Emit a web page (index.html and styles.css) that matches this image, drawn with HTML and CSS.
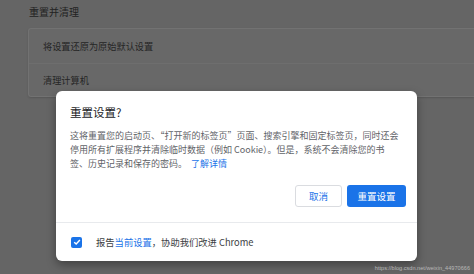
FILE: index.html
```html
<!DOCTYPE html>
<html lang="zh-CN">
  <head>
    <meta charset="UTF-8" />
    <title>重置设置</title>
    <link rel="stylesheet" href="styles.css">
  </head>
  <body>
    <div class="page">
      <h2 class="section-title">重置并清理</h2>
      <div class="card">
        <div class="card-row">将设置还原为原始默认设置</div>
        <div class="card-row">清理计算机</div>
      </div>
    </div>

    <div class="dialog">
      <div class="dialog-body">
        <h1 class="dialog-title">重置设置?</h1>
        <p class="dialog-text">
          这将重置您的启动页、“打开新的标签页”页面、搜索引擎和固定标签页，同时还会停用所有扩展程序并清除临时数据（例如 Cookie）。但是，系统不会清除您的书签、历史记录和保存的密码。<a href="#" class="link">了解详情</a>
        </p>
        <div class="dialog-buttons">
          <button class="btn btn-cancel">取消</button>
          <button class="btn btn-primary">重置设置</button>
        </div>
      </div>
      <div class="dialog-footer">
        <span class="checkbox">
          <svg width="8" height="8" viewBox="0 0 10 10">
            <path d="M1.5 5.2 L4 7.6 L8.6 2.6" fill="none" stroke="#fff" stroke-width="1.8" />
          </svg>
        </span>
        <span class="footer-text">报告<a href="#" class="link">当前设置</a>，协助我们改进 Chrome</span>
      </div>
    </div>

    <div class="watermark">https://blog.csdn.net/weixin_44970666</div>
  </body>
</html>
```

FILE: styles.css
```css
body {
  margin: 0;
  width: 474px;
  height: 274px;
  overflow: hidden;
  background-color: #656565;
  font-family: "Noto Sans CJK SC", "Noto Sans", sans-serif;
  position: relative;
}
.page {
  padding: 5px 0 0 28px;
}
.section-title {
  margin: 0 0 9px 1px;
  font-size: 10px;
  font-weight: normal;
  color: #222;
  line-height: 14px;
}
.card {
  background-color: #686868;
  border: 1px solid #727272;
  border-right: none;
  border-radius: 3px 0 0 3px;
  box-shadow: 0 1px 2px rgba(0, 0, 0, 0.15);
  height: 67px;
}
.card-row {
  padding-left: 14px;
  height: 34px;
  line-height: 34px;
  font-size: 9.2px;
  color: #252525;
}
.card-row + .card-row {
  border-top: 1px solid #6e6e6e;
  height: 32px;
  line-height: 32px;
}
.dialog {
  position: absolute;
  left: 56px;
  top: 91px;
  width: 361px;
  height: 170px;
  background-color: #fff;
  border-radius: 6px;
  box-shadow: 0 4px 10px rgba(0, 0, 0, 0.35);
}
.dialog-body {
  padding: 13px 11px 10px 14px;
  border-bottom: 1px solid #e8eaed;
  height: 108px;
}
.dialog-title {
  margin: 0;
  font-size: 11.5px;
  font-weight: normal;
  color: #202124;
  line-height: 16px;
}
.dialog-text {
  margin: 9px 4px 0 0;
  font-size: 9px;
  line-height: 14px;
  color: #5f6368;
}
.link {
  color: #1a73e8;
  text-decoration: none;
}
.dialog-text .link {
  margin-left: 4px;
}
.dialog-buttons {
  display: flex;
  justify-content: flex-end;
  gap: 5px;
  margin-top: 14px;
}
.btn {
  height: 22px;
  border-radius: 3px;
  font-family: inherit;
  font-size: 9.5px;
  padding: 0;
  cursor: pointer;
}
.btn-cancel {
  width: 47px;
  background-color: #fff;
  border: 1px solid #dadce0;
  color: #1a73e8;
}
.btn-primary {
  width: 59px;
  background-color: #1a73e8;
  border: none;
  color: #fff;
}
.dialog-footer {
  display: flex;
  align-items: center;
  height: 38px;
  padding-left: 15px;
}
.checkbox {
  width: 11px;
  height: 11px;
  border-radius: 2px;
  background-color: #1a73e8;
  display: flex;
  align-items: center;
  justify-content: center;
}
.footer-text {
  margin-left: 14px;
  font-size: 9.3px;
  color: #3c4043;
}
.watermark {
  position: absolute;
  right: 4px;
  bottom: 3px;
  font-family: "Liberation Sans", sans-serif;
  font-size: 5.6px;
  color: #b8b8b8;
}
```
